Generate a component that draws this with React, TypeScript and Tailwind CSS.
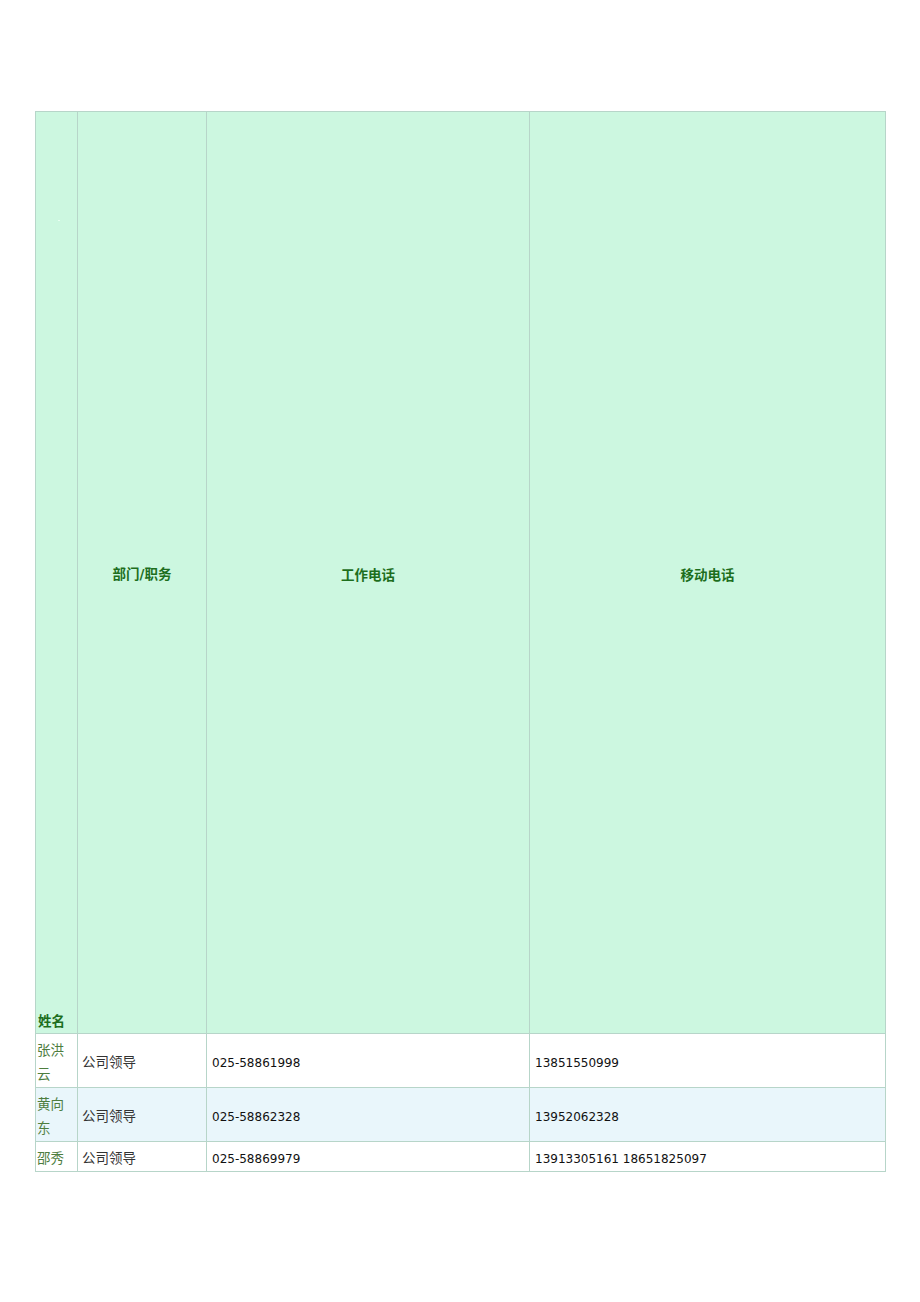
export default function App() {
  const font = { fontFamily: '"Noto Sans CJK SC", "Liberation Sans", sans-serif' };
  const num = "font-['DejaVu_Sans',sans-serif] text-[12px]";
  const rows = [
    { name: "张洪云", dept: "公司领导", work: "025-58861998", mobile: "13851550999", bg: "bg-white", h: "h-[54px]" },
    { name: "黄向东", dept: "公司领导", work: "025-58862328", mobile: "13952062328", bg: "bg-[#e9f6fb]", h: "h-[54px]" },
    { name: "邵秀", dept: "公司领导", work: "025-58869979", mobile: "13913305161 18651825097", bg: "bg-white", h: "h-[30px]" },
  ];
  return (
    <div className="w-[920px] h-[1302px] bg-white pt-[111px] pl-[35px]" style={font}>
      <table className="border-collapse table-fixed w-[850px] text-[13.5px]">
        <colgroup>
          <col className="w-[42px]" />
          <col className="w-[129px]" />
          <col className="w-[323px]" />
          <col className="w-[356px]" />
        </colgroup>
        <thead>
          <tr className="h-[922px] bg-[#ccf7e0]">
            <th className="border border-[#b7d5c9] align-bottom text-left px-[2px] pb-[3px] font-bold text-[#1d6e1d] relative">
              <span className="absolute left-[22px] top-[108px] w-[2px] h-[1px] bg-[#e8fff2]" />
              姓名
            </th>
            <th className="border border-[#b7d5c9] align-middle text-center font-bold text-[#1d6e1d] pt-[3px]">
              部门<span className="font-['DejaVu_Sans',sans-serif]">/</span>职务
            </th>
            <th className="border border-[#b7d5c9] align-middle text-center font-bold text-[#1d6e1d] pt-[3px]">工作电话</th>
            <th className="border border-[#b7d5c9] align-middle text-center font-bold text-[#1d6e1d] pt-[3px]">移动电话</th>
          </tr>
        </thead>
        <tbody>
          {rows.map((r) => (
            <tr key={r.name} className={`${r.bg} ${r.h}`}>
              <td className="border border-[#b7d5c9] pl-[1px] pr-0 leading-[24px] text-[#4d7d3e] align-middle">
                <span className="inline-block w-[28px] break-all">{r.name}</span>
              </td>
              <td className="border border-[#b7d5c9] px-[4px] pt-[2px] text-[#333] align-middle">{r.dept}</td>
              <td className="border border-[#b7d5c9] px-[5px] pt-[2px] text-[#111] align-middle">
                <span className={num}>{r.work}</span>
              </td>
              <td className="border border-[#b7d5c9] px-[5px] pt-[2px] text-[#111] align-middle">
                <span className={num}>{r.mobile}</span>
              </td>
            </tr>
          ))}
        </tbody>
      </table>
    </div>
  );
}
